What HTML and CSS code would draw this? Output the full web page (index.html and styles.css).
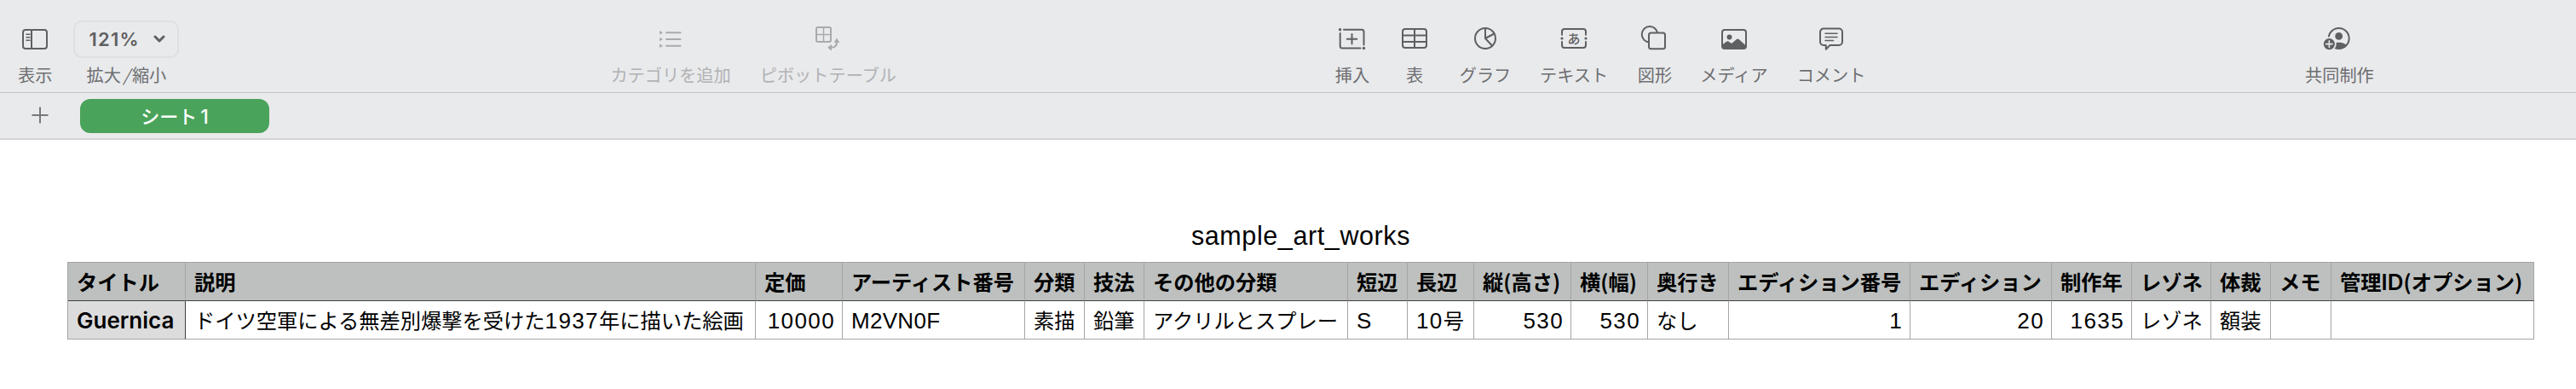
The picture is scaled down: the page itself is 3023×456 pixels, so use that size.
FILE: index.html
```
<!DOCTYPE html>
<html lang="ja">
<head>
  <meta charset="UTF-8">
  <meta name="viewport" content="width=device-width, initial-scale=1.0">
  <title>sample_art_works</title>
  <link rel="stylesheet" href="styles.css">
</head>
<body>
  <div class="toolbar">
    <div class="group group-view">
      <div class="item">
        <svg class="icon" viewBox="0 0 40 36">
          <rect x="6" y="9" width="28" height="22" rx="3"/>
          <path d="M16 9v22"/>
          <path class="thin" d="M10 14.3h4M10 17.8h4M10 21.3h4"/>
        </svg>
        <span class="label">表示</span>
      </div>
      <div class="item">
        <div class="zoom-select">
          <span>121%</span>
          <svg class="chevron" viewBox="0 0 14 10"><path d="M2 2l5 5 5-5"/></svg>
        </div>
        <span class="label label-zoom">拡大<i>/</i>縮小</span>
      </div>
    </div>
    <div class="group group-data disabled">
      <div class="item">
        <svg class="icon" viewBox="0 0 40 36">
          <path d="M15 12.3h16.500M15 20h16.500M15 27.700h16.500"/>
          <path class="fill" d="M7 10l4 2.300-4 2.300zM7 17.700l4 2.300-4 2.300zM7 25.400l4 2.300-4 2.300z"/>
        </svg>
        <span class="label">カテゴリを追加</span>
      </div>
      <div class="item">
        <svg class="icon" viewBox="0 0 40 36">
          <rect x="6" y="6" width="17" height="17" rx="2"/>
          <path class="thin" d="M14.500 6v17M6 14.500h17"/>
          <path d="M23 29.700c4.500 0 7-2 7-6.500"/>
          <path class="fill" d="M19 29.700l5-3.700v7.400zM30 18.500l3.300 5.500h-6.600z"/>
        </svg>
        <span class="label">ピボットテーブル</span>
      </div>
    </div>
    <div class="group group-insert">
      <div class="item">
        <svg class="icon" viewBox="0 0 40 36">
          <path d="M10 8.700h21a2.500 2.500 0 0 1 2.500 2.500v15.300M5.700 13v15a2.500 2.500 0 0 0 2.500 2.500h21.300"/>
          <path d="M19.500 14v11.500M13.800 19.700h11.500"/>
          <circle class="fill" cx="5.600" cy="8.700" r="1.700"/>
          <circle class="fill" cx="33.500" cy="30.500" r="1.700"/>
        </svg>
        <span class="label">挿入</span>
      </div>
      <div class="item">
        <svg class="icon" viewBox="0 0 40 36">
          <rect x="6" y="8" width="28" height="22" rx="3"/>
          <path d="M20 8v22M6 15.500h28M6 23h28"/>
        </svg>
        <span class="label">表</span>
      </div>
      <div class="item">
        <svg class="icon" viewBox="0 0 40 36">
          <circle cx="20" cy="19" r="12"/>
          <path d="M20 7v12l9.500-5M20 19l8 8.500"/>
        </svg>
        <span class="label">グラフ</span>
      </div>
      <div class="item">
        <svg class="icon" viewBox="0 0 40 36">
          <path d="M6 14.700v-3.700a3 3 0 0 1 3-3h22a3 3 0 0 1 3 3v3.700M6 23v4a3 3 0 0 0 3 3h22a3 3 0 0 0 3-3v-4"/>
          <circle class="fill" cx="6" cy="19" r="1.600"/>
          <circle class="fill" cx="34" cy="19" r="1.600"/>
          <text x="20" y="24.500">あ</text>
        </svg>
        <span class="label">テキスト</span>
      </div>
      <div class="item">
        <svg class="icon" viewBox="0 0 40 36">
          <circle cx="14" cy="14.300" r="9.300"/>
          <rect class="front" x="13" y="12.500" width="19" height="18.800" rx="2.500"/>
        </svg>
        <span class="label">図形</span>
      </div>
      <div class="item">
        <svg class="icon" viewBox="0 0 40 36">
          <rect x="6" y="9" width="28" height="22" rx="3"/>
          <circle class="fill" cx="14.500" cy="17.400" r="3"/>
          <path class="fill" d="M6 26.500l5.500-4q1-.7 2 0l3.500 2.500 6-5q1.300-1 2.600 0l8.400 7.500v3.500h-28z"/>
        </svg>
        <span class="label">メディア</span>
      </div>
      <div class="item">
        <svg class="icon" viewBox="0 0 40 36">
          <path d="M11 7.500h18a4 4 0 0 1 4 4v11.500a4 4 0 0 1-4 4h-10.500l-4.700 4.700v-4.700h-2.800a4 4 0 0 1-4-4v-11.500a4 4 0 0 1 4-4z"/>
          <path class="thin" d="M13 13.200h14M13 17.400h14M13 21.600h9.500"/>
        </svg>
        <span class="label">コメント</span>
      </div>
    </div>
    <div class="group group-share">
      <div class="item">
        <svg class="icon" viewBox="0 0 40 36">
          <circle cx="19.700" cy="19" r="12"/>
          <circle class="fill" cx="19.700" cy="16.400" r="4.400"/>
          <path class="fill" d="M11 27.500c2.500-5 15-5 17.500 0-4 5.500-13.500 5.500-17.500 0z"/>
          <circle class="bg" cx="8.400" cy="25.600" r="8.300"/>
          <circle class="fill" cx="8.400" cy="25.600" r="6.600"/>
          <path class="plus" d="M8.400 21.800v7.600M4.600 25.600h7.600"/>
        </svg>
        <span class="label">共同制作</span>
      </div>
    </div>
  </div>

  <div class="tabs">
    <svg class="add" viewBox="0 0 20 20"><path d="M10 .500v19M.500 10h19"/></svg>
    <div class="tab">シート<span>1</span></div>
  </div>

  <div class="sheet">
    <h1>sample_art_works</h1>
    <table>
      <colgroup>
        <col class="c-title"><col class="c-desc"><col class="c-price"><col class="c-artist">
        <col class="c-two"><col class="c-two"><col class="c-other"><col class="c-two">
        <col class="c-long"><col class="c-height"><col class="c-width"><col class="c-depth">
        <col class="c-edno"><col class="c-ed"><col class="c-year"><col class="c-raisonne">
        <col class="c-two"><col class="c-memo"><col class="c-id">
      </colgroup>
      <thead>
        <tr>
          <th>タイトル</th>
          <th>説明</th>
          <th>定価</th>
          <th>アーティスト番号</th>
          <th>分類</th>
          <th>技法</th>
          <th>その他の分類</th>
          <th>短辺</th>
          <th>長辺</th>
          <th>縦(高さ)</th>
          <th>横(幅)</th>
          <th>奥行き</th>
          <th>エディション番号</th>
          <th>エディション</th>
          <th>制作年</th>
          <th>レゾネ</th>
          <th>体裁</th>
          <th>メモ</th>
          <th>管理<span class="latin">ID</span>(オプション)</th>
        </tr>
      </thead>
      <tbody>
        <tr>
          <th><span class="latin">Guernica</span></th>
          <td>ドイツ空軍による無差別爆撃を受けた<span class="num">1937</span>年に描いた絵画</td>
          <td class="right"><span class="num">10000</span></td>
          <td><span class="code">M2VN0F</span></td>
          <td>素描</td>
          <td>鉛筆</td>
          <td>アクリルとスプレー</td>
          <td><span class="code">S</span></td>
          <td><span class="num">10</span>号</td>
          <td class="right"><span class="num">530</span></td>
          <td class="right"><span class="num">530</span></td>
          <td>なし</td>
          <td class="right"><span class="num">1</span></td>
          <td class="right"><span class="num">20</span></td>
          <td class="right"><span class="num">1635</span></td>
          <td>レゾネ</td>
          <td>額装</td>
          <td></td>
          <td></td>
        </tr>
      </tbody>
    </table>
  </div>
</body>
</html>
```

FILE: styles.css
```
* {
  margin: 0;
  padding: 0;
  box-sizing: border-box;
}

body {
  font-family: "Noto Sans CJK JP", sans-serif;
  background-color: #fff;
  color: #000;
  height: 456px;
  overflow: hidden;
}

/* ツールバー */
.toolbar {
  display: flex;
  height: 109px;
  padding-top: 24px;
  background-color: #e9eaec;
  border-bottom: 1px solid #c1c2c4;
}

.group {
  display: flex;
  align-items: flex-start;
  color: #5f6062;
}

.group-view {
  margin-left: 21px;
  gap: 25px;
}

.group-data {
  margin-left: 506px;
  gap: 34px;
}

.group-insert {
  display: grid;
  grid-template-columns: 72px 74px 92px 116px 74px 112px 116px;
  margin-left: 499px;
}

.group-share {
  margin-left: 498px;
}

.disabled {
  color: #a9aaac;
}

.item {
  display: flex;
  flex-direction: column;
  align-items: center;
}

.label {
  margin-top: 8px;
  font-size: 20.2px;
  line-height: 24px;
  color: #6d6e70;
  white-space: nowrap;
}

.disabled .label {
  color: #b1b2b4;
}

.label-zoom i {
  display: inline-block;
  width: 13px;
  text-align: center;
}

.icon {
  display: block;
  width: 40px;
  height: 36px;
  margin: 2px 0 6px;
  fill: none;
  stroke: currentColor;
  stroke-width: 2;
  stroke-linecap: round;
  stroke-linejoin: round;
}

.icon .thin {
  stroke-width: 1.5;
}

.icon .fill {
  fill: currentColor;
  stroke: none;
}

.icon .front {
  fill: #e9eaec;
}

.icon .bg {
  fill: #e9eaec;
  stroke: none;
}

.icon .plus {
  stroke: #e9eaec;
  stroke-width: 1.6;
}

.icon text {
  font-size: 15px;
  font-weight: 500;
  text-anchor: middle;
  fill: currentColor;
  stroke: none;
}

.zoom-select {
  display: flex;
  align-items: center;
  justify-content: space-between;
  width: 124px;
  height: 44px;
  padding: 0 14px 0 16px;
  border: 2px solid #dedfe1;
  border-radius: 10px;
  font-family: Inter, sans-serif;
  font-size: 22px;
  font-weight: 600;
  letter-spacing: 1.3px;
}

.chevron {
  width: 14px;
  height: 10px;
  fill: none;
  stroke: currentColor;
  stroke-width: 3;
  stroke-linecap: round;
  stroke-linejoin: round;
}

/* シートタブ */
.tabs {
  display: flex;
  align-items: center;
  height: 55px;
  padding-left: 37px;
  background-color: #e9eaec;
  border-bottom: 2px solid #d1d3d6;
}

.add {
  width: 20px;
  height: 20px;
  margin-top: -2px;
  fill: none;
  stroke: #77787a;
  stroke-width: 2;
}

.tab {
  width: 222px;
  height: 40px;
  margin-left: 37px;
  border-radius: 12px;
  background-color: #4aa35a;
  color: #fff;
  font-size: 22px;
  font-weight: 500;
  line-height: 39px;
  text-align: center;
}

.tab span {
  margin-left: 4px;
  font-family: Inter, sans-serif;
  font-size: 23px;
}

/* 表 */
.sheet {
  width: 2895px;
  margin-left: 79px;
  padding-top: 94px;
}

h1 {
  height: 49px;
  font-family: "Liberation Sans", sans-serif;
  font-size: 30.5px;
  font-weight: 400;
  line-height: 37px;
  letter-spacing: 0.6px;
  text-align: center;
}

table {
  width: 2895px;
  table-layout: fixed;
  border-collapse: separate;
  border-spacing: 0;
  border-top: 1px solid #a5a5a5;
  border-left: 1px solid #a5a5a5;
  font-size: 24.25px;
  line-height: 36px;
}

th,
td {
  height: 45px;
  padding: 0 8px 0 10px;
  border-right: 1px solid #a5a5a5;
  border-bottom: 1px solid #a5a5a5;
  text-align: left;
  white-space: nowrap;
}

thead th {
  background-color: #bdc0bf;
  border-bottom-color: #3f3f3f;
}

tbody th {
  background-color: #dcdcdc;
  border-right-color: #3f3f3f;
}

.right {
  text-align: right;
}

.num,
.code {
  font-family: "Liberation Sans", sans-serif;
  font-size: 26px;
  line-height: 1;
}

.code {
  letter-spacing: 0.3px;
}

.num {
  letter-spacing: 1.4px;
}

.latin {
  font-family: Inter, sans-serif;
  font-size: 26px;
  font-weight: 600;
  line-height: 1;
}

.c-title { width: 138px; }
.c-desc { width: 669px; }
.c-price { width: 102px; }
.c-artist { width: 214px; }
.c-two { width: 70px; }
.c-other { width: 239px; }
.c-long { width: 78px; }
.c-height { width: 114px; }
.c-width { width: 90px; }
.c-depth { width: 95px; }
.c-edno { width: 213px; }
.c-ed { width: 166px; }
.c-year { width: 94px; }
.c-raisonne { width: 93px; }
.c-memo { width: 71px; }
.c-id { width: 238px; }
```
